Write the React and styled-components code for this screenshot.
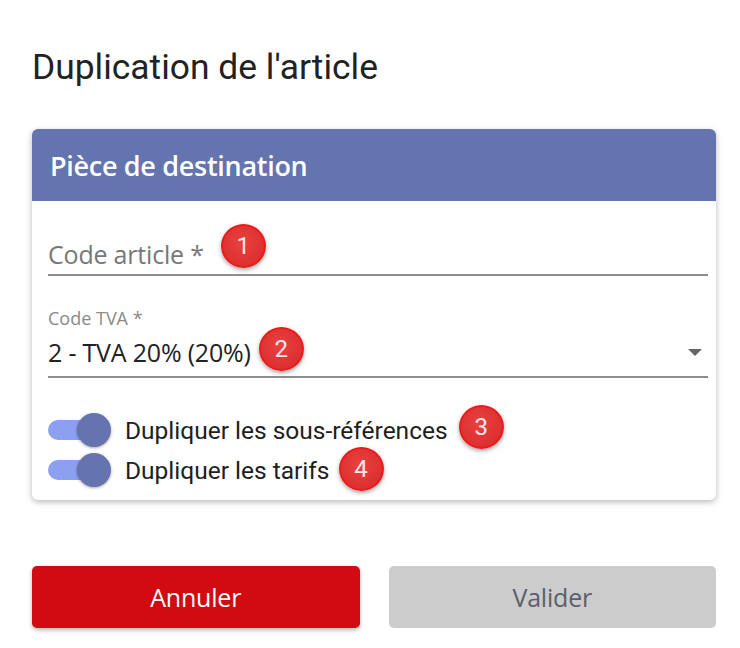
import React from 'react';
import styled, { createGlobalStyle } from 'styled-components';

const GlobalStyle = createGlobalStyle`
  body {
    margin: 0;
    background: #ffffff;
    font-family: Roboto, "Liberation Sans", sans-serif;
  }
`;

const Page = styled.div`
  padding: 46px 24px 20px 32px;
`;

const Title = styled.h1`
  margin: 0;
  font-family: Roboto, sans-serif;
  font-weight: 400;
  font-size: 35.4px;
  line-height: 42px;
  color: #222222;
`;

const Card = styled.section`
  margin-top: 41px;
  border-radius: 6px;
  overflow: hidden;
  background: #ffffff;
  box-shadow: 0 2px 6px rgba(0, 0, 0, 0.28);
`;

const CardHeader = styled.header`
  height: 72px;
  display: flex;
  align-items: center;
  padding: 0 18px;
  background: #6474ae;
  color: #ffffff;
  font-family: "Open Sans", sans-serif;
  font-weight: 600;
  font-size: 27px;
  letter-spacing: -0.3px;
`;

const CardBody = styled.div`
  padding: 36px 8px 10px 16px;
`;

const Field = styled.div`
  display: flex;
  flex-direction: column;
  border-bottom: 2px solid #8e8e8e;
  padding-bottom: ${p => p.$bottom || 6}px;
  margin-bottom: ${p => p.$space || 0}px;
`;

const SmallLabel = styled.div`
  font-family: "Open Sans", sans-serif;
  font-size: 18px;
  line-height: 22px;
  color: #8a8a8a;
  margin-bottom: 6px;
`;

const FieldRow = styled.div`
  display: flex;
  align-items: center;
  height: 34px;
`;

const FieldText = styled.span`
  font-family: "Open Sans", sans-serif;
  font-size: 25px;
  line-height: 34px;
  color: ${p => (p.$muted ? '#777777' : '#222222')};
  letter-spacing: -0.2px;
`;

const Spacer = styled.div`
  flex: 1;
`;

const Arrow = styled.span`
  width: 0;
  height: 0;
  margin-right: 6px;
  border-left: 7px solid transparent;
  border-right: 7px solid transparent;
  border-top: 7px solid #666666;
`;

const Badge = styled.span`
  position: relative;
  top: ${p => -(p.$lift || 0)}px;
  display: inline-flex;
  align-items: center;
  justify-content: center;
  flex: none;
  box-sizing: border-box;
  width: 45px;
  height: 44px;
  margin: -12px 0 -12px ${p => p.$gap || 10}px;
  border-radius: 50%;
  background: radial-gradient(circle at 45% 40%, #ea4040, #d72a2a);
  border: 2px solid #f01818;
  box-shadow: 0 2px 4px rgba(0, 0, 0, 0.35);
  color: #ffe9e9;
  font-family: Roboto, sans-serif;
  font-size: 24px;
`;

const Toggles = styled.div`
  display: flex;
  flex-direction: column;
  margin-top: 32px;
`;

const ToggleRow = styled.div`
  display: flex;
  align-items: center;
  height: 40px;
`;

const Switch = styled.span`
  position: relative;
  flex: none;
  width: 60px;
  height: 20px;
  margin-right: 17px;
  border-radius: 10px;
  background: #8d9ff1;
`;

const Thumb = styled.span`
  position: absolute;
  right: -3px;
  top: -7px;
  width: 34px;
  height: 34px;
  border-radius: 50%;
  background: #6573ae;
  box-shadow: 0 1px 3px rgba(0, 0, 0, 0.35);
`;

const ToggleLabel = styled.span`
  font-family: Roboto, sans-serif;
  font-size: 24.5px;
  color: #1e1e1e;
`;

const Actions = styled.div`
  display: grid;
  grid-template-columns: 1fr 1fr;
  gap: 29px;
  margin-top: 66px;
`;

const Button = styled.button`
  height: 62px;
  border: none;
  border-radius: 5px;
  font-family: "Open Sans", sans-serif;
  font-size: 25px;
  letter-spacing: -0.2px;
  background: ${p => (p.$primary ? '#d20a11' : '#cccccc')};
  color: ${p => (p.$primary ? '#ffffff' : '#5b606c')};
  box-shadow: ${p => (p.$primary ? '0 2px 4px rgba(0,0,0,0.3)' : 'none')};
`;

const Toggle = ({ label, badge, gap, lift }) => (
  <ToggleRow>
    <Switch>
      <Thumb />
    </Switch>
    <ToggleLabel>{label}</ToggleLabel>
    <Badge $gap={gap} $lift={lift}>{badge}</Badge>
  </ToggleRow>
);

export default function App() {
  return (
    <Page>
      <GlobalStyle />
      <Title>Duplication de l'article</Title>
      <Card>
        <CardHeader>Pièce de destination</CardHeader>
        <CardBody>
          <Field $bottom={3} $space={31}>
            <FieldRow>
              <FieldText $muted>Code article *</FieldText>
              <Badge $gap={17} $lift={8}>1</Badge>
            </FieldRow>
          </Field>
          <Field $bottom={7}>
            <SmallLabel>Code TVA *</SmallLabel>
            <FieldRow>
              <FieldText>2 - TVA 20% (20%)</FieldText>
              <Badge $gap={8} $lift={3}>2</Badge>
              <Spacer />
              <Arrow />
            </FieldRow>
          </Field>
          <Toggles>
            <Toggle label="Dupliquer les sous-références" badge="3" gap={11} lift={3} />
            <Toggle label="Dupliquer les tarifs" badge="4" gap={9} lift={1} />
          </Toggles>
        </CardBody>
      </Card>
      <Actions>
        <Button $primary>Annuler</Button>
        <Button>Valider</Button>
      </Actions>
    </Page>
  );
}
